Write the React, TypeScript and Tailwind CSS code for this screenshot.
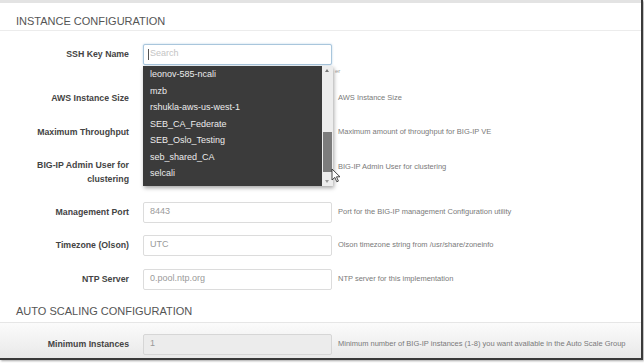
import React from "react";

const rows = [
  { label: "AWS Instance Size", help: "AWS Instance Size", mt: "mt-[22px]" },
  { label: "Maximum Throughput", help: "Maximum amount of throughput for BIG-IP VE", mt: "mt-[12px]" },
];

const keys = [
  "leonov-585-ncali",
  "mzb",
  "rshukla-aws-us-west-1",
  "SEB_CA_Federate",
  "SEB_Oslo_Testing",
  "seb_shared_CA",
  "selcali",
];

const Label = ({ children }: { children: React.ReactNode }) => (
  <div className="w-[129px] shrink-0 text-right text-[8.75px] font-bold leading-[14px] text-[#444]">
    {children}
  </div>
);

const Help = ({ children }: { children: React.ReactNode }) => (
  <div className="ml-[6px] whitespace-nowrap text-[7.5px] text-[#7a7a7a]">{children}</div>
);

const Field = ({ value }: { value: string }) => (
  <div className="ml-[14px] flex h-[21px] w-[189px] shrink-0 items-center rounded-[2px] border border-[#dcdcdc] bg-white px-[6px] text-[9px] text-[#9a9a9a]">
    {value}
  </div>
);

export default function App() {
  return (
    <div
      className="relative h-[363px] w-[644px] overflow-hidden bg-white"
      style={{ fontFamily: "'Liberation Sans', Arial, sans-serif" }}
    >
      <div className="relative flex h-[360px] w-[643px] flex-col border-b-[2px] border-r-[2px] border-[#3a3a3a] bg-white shadow-[1px_1px_2px_rgba(0,0,0,0.35)]">
        <div className="h-[3px] bg-[#e3e3e3]" />

        <div className="h-[28px] border-b border-[#ececec] pl-[16px] pt-[12px] text-[11px] leading-[13px] text-[#555]">
          INSTANCE CONFIGURATION
        </div>

        {/* SSH key row */}
        <div className="mt-[12px] flex h-[22px] items-center">
          <Label>SSH Key Name</Label>
          <div className="ml-[14px] flex h-[21px] w-[189px] shrink-0 items-center rounded-[2px] border border-[#a9c6dc] bg-white px-[4px] text-[9px] text-[#c4c4c4] shadow-[0_0_2px_rgba(102,160,210,0.5)]">
            <span className="mr-[1px] h-[11px] w-px bg-[#555]" />
            Search
          </div>
        </div>

        {rows.map((r) => (
          <div key={r.label} className={`${r.mt} flex h-[22px] items-center`}>
            <Label>{r.label}</Label>
            <div className="ml-[14px] w-[189px] shrink-0" />
            <Help>{r.help}</Help>
          </div>
        ))}

        <div className="mt-[14px] flex h-[30px] items-center">
          <Label>
            BIG-IP Admin User for
            <br />
            clustering
          </Label>
          <div className="ml-[14px] w-[189px] shrink-0 self-start" />
          <div className="mb-[10px]">
            <Help>BIG-IP Admin User for clustering</Help>
          </div>
        </div>

        <div className="mt-[14px] flex h-[22px] items-center">
          <Label>Management Port</Label>
          <Field value="8443" />
          <Help>Port for the BIG-IP management Configuration utility</Help>
        </div>
        <div className="mt-[11px] flex h-[22px] items-center">
          <Label>Timezone (Olson)</Label>
          <Field value="UTC" />
          <Help>Olson timezone string from /usr/share/zoneinfo</Help>
        </div>
        <div className="mt-[12px] flex h-[22px] items-center">
          <Label>NTP Server</Label>
          <Field value="0.pool.ntp.org" />
          <Help>NTP server for this implementation</Help>
        </div>

        <div className="mt-[15px] pl-[16px] text-[11px] leading-[13px] text-[#555]">
          AUTO SCALING CONFIGURATION
        </div>

        <div className="mt-[4px] flex flex-1 flex-col border-t border-[#e6e6e6] bg-gradient-to-b from-[#fbfbfb] to-[#e9e9e9]">
          <div className="mt-[10px] flex h-[22px] items-center">
            <Label>Minimum Instances</Label>
            <div className="ml-[14px] flex h-[21px] w-[189px] shrink-0 items-center rounded-[2px] border border-[#d6d6d6] bg-[#ececec] px-[6px] text-[9px] text-[#999]">
              1
            </div>
            <Help>Minimum number of BIG-IP instances (1-8) you want available in the Auto Scale Group</Help>
          </div>
        </div>

        {/* dropdown list over the form */}
        <div className="absolute left-[143px] top-[66px] flex h-[120px] w-[190px] shadow-[1px_2px_4px_rgba(0,0,0,0.35)]">
          <div className="flex-1 bg-[#3b3b3b] pl-[7px] text-[9px] text-[#ececec]">
            {keys.map((k) => (
              <div key={k} className="h-[16.5px] leading-[16.5px]">
                {k}
              </div>
            ))}
          </div>
          <div className="relative w-[11px] bg-[#ededed]">
            <div className="absolute left-[3px] top-[3px] h-0 w-0 border-x-[2.5px] border-b-[3px] border-x-transparent border-b-[#777]" />
            <div className="absolute left-[1px] top-[66px] h-[40px] w-[9px] bg-[#7c7c7c]" />
            <div className="absolute bottom-[3px] left-[3px] h-0 w-0 border-x-[2.5px] border-t-[3px] border-x-transparent border-t-[#999]" />
          </div>
        </div>
        <div className="absolute left-[335px] top-[67px] text-[6px] text-[#999]">er</div>

        {/* mouse pointer */}
        <svg className="absolute left-[331px] top-[168px]" width="10" height="15" viewBox="0 0 10 15">
          <path d="M1 1 L1 12 L3.8 9.4 L5.8 13.8 L7.4 13.1 L5.5 8.8 L9 8.8 Z" fill="#fff" stroke="#333" strokeWidth="0.9" />
        </svg>
      </div>
    </div>
  );
}
